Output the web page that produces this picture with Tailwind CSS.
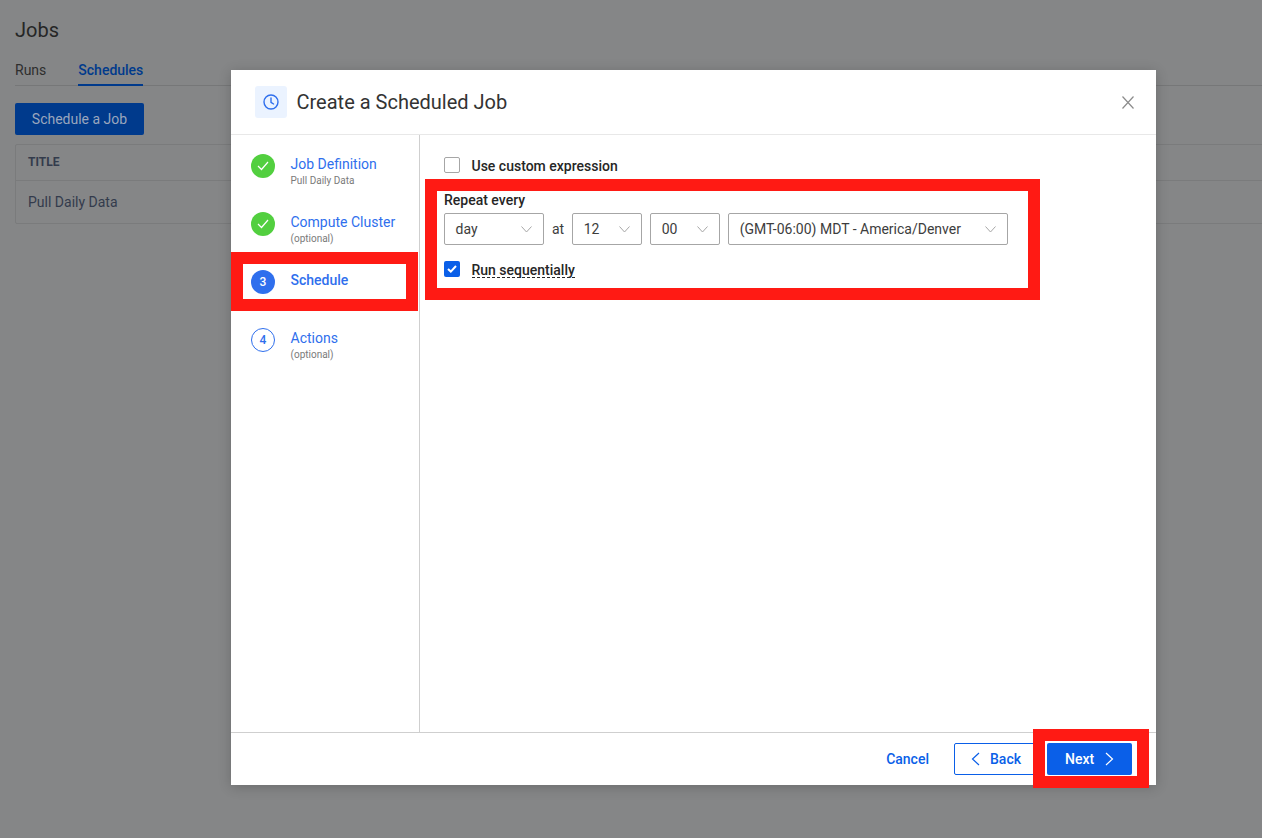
<!DOCTYPE html>
<html lang="en">
  <head>
    <meta charset="UTF-8" />
    <meta name="viewport" content="width=device-width, initial-scale=1.0" />
    <title>Jobs</title>
    <script src="https://cdn.jsdelivr.net/npm/@tailwindcss/browser@4"></script>
  </head>
  <body class="relative h-[838px] w-[1262px] overflow-hidden bg-[#858687] font-['Roboto',sans-serif]">
    <!-- page behind the dialog, wider than the window so its rules run off the right edge -->
    <main class="w-[1300px] pl-[15px] pt-[18px]">
      <h1 class="h-[24px] text-[20px] leading-[24px] text-[#262626]">Jobs</h1>
      <nav class="mt-[18px] flex h-[26px] gap-[32px] border-b border-[#767778] text-[14px] leading-[20px]">
        <span class="text-[#2e2e2e]">Runs</span>
        <span class="h-[26px] border-b-[2px] border-[#003a8c] font-medium text-[#003a8c]">Schedules</span>
      </nav>
      <button class="mt-[17px] block h-[32px] w-[129px] rounded-[2px] bg-[#003a8c] text-[14px] text-[#9aa6bd]">Schedule a Job</button>
      <div class="mt-[9px] rounded-[2px] border border-[#7a7b7c] text-[#333b4c]">
        <div class="flex h-[36px] items-center border-b border-[#7a7b7c] pb-[2px] pl-[12px] text-[12px] font-bold">TITLE</div>
        <div class="flex h-[42px] items-center pl-[12px] pt-[1px] text-[14px]">Pull Daily Data</div>
      </div>
    </main>

    <!-- dialog -->
    <section class="absolute left-[231px] top-[70px] flex h-[715px] w-[925px] flex-col bg-white shadow-[0_2px_12px_rgba(0,0,0,0.2)]">
      <header class="flex h-[65px] shrink-0 items-center border-b border-[#e8e8e8] pl-[24px] pr-[22px]">
        <div class="flex h-[32px] w-[32px] items-center justify-center rounded-[3px] bg-[#ebf3ff]">
          <svg width="18" height="18" viewBox="0 0 18 18" fill="none" stroke="#2f6fed" stroke-width="1.4" stroke-linecap="round" stroke-linejoin="round">
            <circle cx="9" cy="9" r="7" />
            <path d="M9 5v4.4l2.6 1.6" />
          </svg>
        </div>
        <h2 class="ml-[9.5px] text-[20px] leading-[28px] text-[#333333]">Create a Scheduled Job</h2>
        <svg class="ml-auto" width="12" height="13" viewBox="0 0 12 13" fill="none" stroke="#8c8c8c" stroke-width="1.2">
          <path d="M.5 .5l11 12M11.500 .5l-11 12" />
        </svg>
      </header>

      <div class="flex min-h-0 flex-1">
        <!-- steps -->
        <aside class="w-[189px] shrink-0 border-r border-[#cfcfcf] pl-[20px] pt-[19px]">
          <div class="flex h-[58px] gap-[15.500px]">
            <div class="flex h-[24px] w-[24px] items-center justify-center rounded-full bg-[#52cf3f]">
              <svg width="12" height="10" viewBox="0 0 12 10" fill="none" stroke="#ffffff" stroke-width="1.2"><path d="M1 5l3.5 3.5L11 1" /></svg>
            </div>
            <div class="pt-[2px]">
              <div class="text-[14px] leading-[17px] text-[#2f6fed]">Job Definition</div>
              <div class="text-[10px] leading-[16px] text-[#7a7a7a]">Pull Daily Data</div>
            </div>
          </div>
          <div class="flex h-[58px] gap-[15.500px]">
            <div class="flex h-[24px] w-[24px] items-center justify-center rounded-full bg-[#52cf3f]">
              <svg width="12" height="10" viewBox="0 0 12 10" fill="none" stroke="#ffffff" stroke-width="1.2"><path d="M1 5l3.5 3.5L11 1" /></svg>
            </div>
            <div class="pt-[2px]">
              <div class="text-[14px] leading-[17px] text-[#2f6fed]">Compute Cluster</div>
              <div class="text-[10px] leading-[16px] text-[#7a7a7a]">(optional)</div>
            </div>
          </div>
          <div class="flex h-[58px] gap-[15.500px]">
            <div class="flex h-[24px] w-[24px] items-center justify-center rounded-full bg-[#2f6fed] text-[12px] font-medium text-white">3</div>
            <div class="pt-[2px] text-[14px] font-medium leading-[17px] text-[#2f6fed]">Schedule</div>
          </div>
          <div class="flex h-[58px] gap-[15.500px]">
            <div class="flex h-[24px] w-[24px] items-center justify-center rounded-full border border-[#2f6fed] text-[12px] font-medium text-[#2f6fed]">4</div>
            <div class="pt-[2px]">
              <div class="text-[14px] leading-[17px] text-[#2f6fed]">Actions</div>
              <div class="text-[10px] leading-[16px] text-[#7a7a7a]">(optional)</div>
            </div>
          </div>
        </aside>

        <!-- schedule form -->
        <div class="flex-1 pl-[24px] pt-[22px]">
          <label class="flex h-[16px] items-center gap-[11.500px] text-[14px] font-medium leading-[16px] text-[#262626]">
            <span class="h-[16px] w-[16px] rounded-[2px] border border-[#a6a6a6] bg-white"></span>
            <span class="pt-[2px]">Use custom expression</span>
          </label>
          <div class="mt-[19px] text-[14px] font-medium leading-[16px] text-[#262626]">Repeat every</div>
          <div class="mt-[5px] flex items-center text-[14px] text-[#3d3d3d]">
            <div class="flex h-[32px] w-[100px] items-center justify-between rounded-[2px] border border-[#a6a6a6] pl-[10.500px] pr-[11px]">
              day
              <svg width="11" height="7" viewBox="0 0 11 7" fill="none" stroke="#a6a6a6"><path d="M.5 .5l5 5.5 5-5.5" /></svg>
            </div>
            <span class="mx-[8px]">at</span>
            <div class="flex h-[32px] w-[70px] items-center justify-between rounded-[2px] border border-[#a6a6a6] pl-[10.500px] pr-[11px]">
              12
              <svg width="11" height="7" viewBox="0 0 11 7" fill="none" stroke="#a6a6a6"><path d="M.5 .5l5 5.5 5-5.5" /></svg>
            </div>
            <div class="ml-[8px] flex h-[32px] w-[70px] items-center justify-between rounded-[2px] border border-[#a6a6a6] pl-[10.500px] pr-[11px]">
              00
              <svg width="11" height="7" viewBox="0 0 11 7" fill="none" stroke="#a6a6a6"><path d="M.5 .5l5 5.5 5-5.5" /></svg>
            </div>
            <div class="ml-[8px] flex h-[32px] w-[280px] items-center justify-between rounded-[2px] border border-[#a6a6a6] pl-[10.500px] pr-[11px]">
              (GMT-06:00) MDT - America/Denver
              <svg width="11" height="7" viewBox="0 0 11 7" fill="none" stroke="#a6a6a6"><path d="M.5 .5l5 5.5 5-5.5" /></svg>
            </div>
          </div>
          <label class="mt-[16px] flex h-[16px] items-center gap-[11.500px] text-[14px] font-medium leading-[16px] text-[#262626]">
            <span class="flex h-[16px] w-[16px] items-center justify-center rounded-[2px] bg-[#0a5fe8]">
              <svg width="10" height="8" viewBox="0 0 10 8" fill="none" stroke="#ffffff" stroke-width="2"><path d="M1 4l2.8 2.6L9 1" /></svg>
            </span>
            <span class="mt-[2px] h-[16px] border-b border-dashed border-[#262626] leading-[17px]">Run sequentially</span>
          </label>
        </div>
      </div>

      <footer class="flex h-[53px] shrink-0 items-center border-t border-[#cfcfcf] pr-[24px]">
        <span class="ml-auto text-[14px] font-medium text-[#0a5fe8]">Cancel</span>
        <button class="ml-[25px] flex h-[32px] w-[84px] items-center gap-[10px] rounded-[2px] border border-[#0a5fe8] pl-[16px] text-[14px] font-medium text-[#0a5fe8]">
          <svg width="9" height="14" viewBox="0 0 9 14" fill="none" stroke="#0a5fe8" stroke-width="1.2"><path d="M8 1L1.500 7 8 13" /></svg>
          Back
        </button>
        <button class="ml-[9px] flex h-[32px] w-[85px] items-center gap-[11px] rounded-[2px] bg-[#0a5fe8] pl-[18px] text-[14px] font-medium text-white">
          Next
          <svg width="9" height="14" viewBox="0 0 9 14" fill="none" stroke="#ffffff" stroke-width="1.2"><path d="M1 1l6.500 6L1 13" /></svg>
        </button>
      </footer>
    </section>

    <!-- red annotation frames -->
    <div class="absolute left-[231px] top-[252px] h-[59px] w-[187px] border-[12px] border-[#ff1a14]"></div>
    <div class="absolute left-[425px] top-[179px] h-[121px] w-[615px] border-[12px] border-[#ff1a14]"></div>
    <div class="absolute left-[1033px] top-[729px] h-[59px] w-[116px] border-[12px] border-[#ff1a14]"></div>
  </body>
</html>
